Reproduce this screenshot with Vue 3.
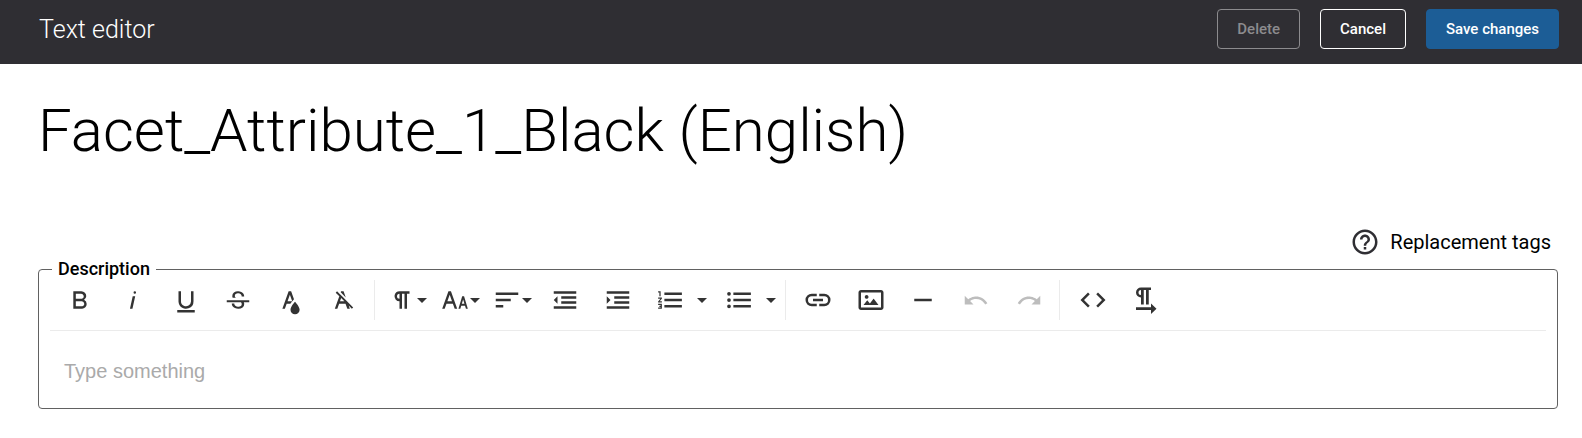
<script setup>
import { ref } from 'vue'

const description = ref('')

const help =
  'M11 18h2v-2h-2v2zm1-16C6.48 2 2 6.48 2 12s4.48 10 10 10 10-4.48 10-10S17.52 2 12 2zm0 18c-4.41 0-8-3.59-8-8s3.59-8 8-8 8 3.59 8 8-3.59 8-8 8zm0-14c-2.21 0-4 1.79-4 4h2c0-1.1.9-2 2-2s2 .9 2 2c0 2-3 1.75-3 5h2c0-2.25 3-2.5 3-5 0-2.21-1.79-4-4-4z'

const groups = [
  {
    name: 'text',
    items: [
      { label: 'Bold', d: 'M15.25,11.8h0A3.68,3.68,0,0,0,17,9a3.93,3.93,0,0,0-3.86-4H6.65V19h7a3.74,3.74,0,0,0,3.7-3.78V15.1A3.64,3.64,0,0,0,15.25,11.8ZM8.65,7h4.2a2.09,2.09,0,0,1,2,1.3,2.09,2.09,0,0,1-1.37,2.61,2.23,2.23,0,0,1-.63.09H8.65Zm4.6,10H8.65V13h4.6a2.09,2.09,0,0,1,2,1.3,2.09,2.09,0,0,1-1.37,2.61A2.23,2.23,0,0,1,13.25,17Z' },
      { label: 'Italic', d: 'M11.76,9h2l-2.2,10h-2Zm1.68-4a1,1,0,1,0,1,1,1,1,0,0,0-1-1Z' },
      { label: 'Underline', d: 'M19,20v2H5V20Zm-3-6.785a4,4,0,0,1-5.74,3.4A3.75,3.75,0,0,1,8,13.085V5.005H6v8.21a6,6,0,0,0,8,5.44,5.851,5.851,0,0,0,4-5.65v-8H16ZM16,5v0h2V5ZM8,5H6v0H8Z' },
      { label: 'Strikethrough', d: 'M3,12.20294H21v1.5H16.63422a3.59782,3.59782,0,0,1,.34942,1.5929,3.252,3.252,0,0,1-1.31427,2.6997A5.55082,5.55082,0,0,1,12.20251,19a6.4421,6.4421,0,0,1-2.62335-.539,4.46335,4.46335,0,0,1-1.89264-1.48816,3.668,3.668,0,0,1-.67016-2.15546V14.704h.28723v-.0011h.34149v.0011H9.02v.11334a2.18275,2.18275,0,0,0,.85413,1.83069,3.69,3.69,0,0,0,2.32836.67926,3.38778,3.38778,0,0,0,2.07666-.5462,1.73346,1.73346,0,0,0,.7013-1.46655,1.69749,1.69749,0,0,0-.647-1.43439,3.00525,3.00525,0,0,0-.27491-.17725H3ZM16.34473,7.05981A4.18163,4.18163,0,0,0,14.6236,5.5462,5.627,5.627,0,0,0,12.11072,5,5.16083,5.16083,0,0,0,8.74719,6.06213,3.36315,3.36315,0,0,0,7.44006,8.76855a3.22923,3.22923,0,0,0,.3216,1.42786h2.59668c-.08338-.05365-.18537-.10577-.25269-.16064a1.60652,1.60652,0,0,1-.65283-1.30036,1.79843,1.79843,0,0,1,.68842-1.5108,3.12971,3.12971,0,0,1,1.96948-.55243,3.04779,3.04779,0,0,1,2.106.6687,2.35066,2.35066,0,0,1,.736,1.83258v.11341h2.00317V9.17346A3.90013,3.90013,0,0,0,16.34473,7.05981Z' },
      { label: 'Text color', d: 'M15.2,13.494s-3.6,3.9-3.6,6.3a3.65,3.65,0,0,0,7.3.1v-.1C18.9,17.394,15.2,13.494,15.2,13.494Zm-1.47-1.357.669-.724L12.1,5h-2l-5,14h2l1.43-4h2.943A24.426,24.426,0,0,1,13.726,12.137ZM11.1,7.8l1.86,5.2H9.244Z' },
      { label: 'Clear formatting', d: 'M11.48,10.09l-1.2-1.21L8.8,7.41,6.43,5,5.37,6.1,8.25,9,4.66,19h2l1.43-4h5.14l1.43,4h2l-.89-2.51L18.27,19l1.07-1.06L14.59,13.2ZM8.8,13l.92-2.56L12.27,13Zm.56-7.15L9.66,5h2l1.75,4.9Z' },
    ],
  },
  {
    name: 'paragraph',
    items: [
      { label: 'Paragraph format', menu: true, d: 'M10.15,5A4.11,4.11,0,0,0,6.08,8.18,4,4,0,0,0,10,13v6h2V7h2V19h2V7h2V5ZM8,9a2,2,0,0,1,2-2v4A2,2,0,0,1,8,9Z' },
      { label: 'Font size', menu: true, d: 'M20.75,19h1.5l-3-10h-1.5l-3,10h1.5L17,16.5h3Zm-3.3-4,1.05-3.5L19.55,15Zm-5.7,4h2l-5-14h-2l-5,14h2l1.43-4h5.14ZM5.89,13,7.75,7.79,9.61,13Z' },
      { label: 'Align', menu: true, d: 'M3,18h6V16H3ZM3,6v2h18V6ZM3,13h12V11H3Z' },
      { label: 'Decrease indent', d: 'M3,12l3,3V9ZM3,19h18v-2H3ZM3,7h18V5H3ZM9,11h12V9H9ZM9,15h12v-2H9Z' },
      { label: 'Increase indent', d: 'M3,9v6l3-3ZM3,19h18v-2H3ZM3,7h18V5H3ZM9,11h12V9H9ZM9,15h12v-2H9Z' },
      { label: 'Ordered list', split: true, d: 'M2.5,16h2v.5h-1v1h1V18h-2v1h3V15h-3Zm1-7h1V5h-2V6h1Zm-1,2H4.3L2.5,13.1V14h3V13H3.7l1.8-2.1V10h-3Zm5-5V8h14V6Zm0,12h14V16H7.5Zm0-5h14V11H7.5Z' },
      { label: 'Unordered list', split: true, d: 'M4,10.5a1.5,1.5,0,1,0,0,3a1.5,1.5,0,1,0,0-3ZM4,5.5a1.5,1.5,0,1,0,0,3a1.5,1.5,0,1,0,0-3ZM4,15.5a1.5,1.5,0,1,0,0,3a1.5,1.5,0,1,0,0-3ZM7.5,6v2h14V6ZM7.5,18h14v-2h-14ZM7.5,13h14v-2h-14Z' },
    ],
  },
  {
    name: 'insert',
    items: [
      { label: 'Insert link', d: 'M11,17H7A5,5,0,0,1,7,7h4V9H7a3,3,0,0,0,0,6h4ZM17,7H13V9h4a3,3,0,0,1,0,6H13v2h4A5,5,0,0,0,17,7Zm-1,4H8v2h8Z' },
      { label: 'Insert image', d: 'M14.2,11l3.8,5H6l3-3.9l2.1,2.7L14,11H14.2z M8.5,11c0.8,0,1.5-0.7,1.5-1.5S9.3,8,8.5,8S7,8.7,7,9.5C7,10.3,7.7,11,8.5,11z M22,6v12c0,1.1-0.9,2-2,2H4c-1.1,0-2-0.9-2-2V6c0-1.1,0.9-2,2-2h16C21.1,4,22,4.9,22,6z M20,8.8V6H4v12h16V8.8z' },
      { label: 'Insert horizontal line', d: 'M5,11h14v2H5Z' },
      { label: 'Undo', disabled: true, d: 'M10.4,9.4c-1.7,0.3-3.2,0.9-4.6,2L3,8.5v7h7l-2.7-2.7c3.7-2.6,8.8-1.8,11.5,1.9c0.2,0.3,0.4,0.5,0.5,0.8l1.8-0.9C18.9,10.8,14.7,8.7,10.4,9.4z' },
      { label: 'Redo', disabled: true, d: 'M13.6,9.4c1.7,0.3,3.2,0.9,4.6,2L21,8.5v7h-7l2.7-2.7C13,10.1,7.9,11,5.3,14.7c-0.2,0.3-0.4,0.5-0.5,0.8L3,14.6C5.1,10.8,9.3,8.7,13.6,9.4z' },
    ],
  },
  {
    name: 'view',
    items: [
      { label: 'Code view', d: 'M9.4,16.6,4.8,12,9.4,7.4,8,6,2,12l6,6Zm5.2,0L19.2,12,14.6,7.4,16,6l6,6-6,6Z' },
      { label: 'Left to right', d: 'M8,2A4,4,0,0,0,8,10V15.5h2.2V4h1.8V15.5h2.2V4H16V2ZM8,4V8A2,2,0,0,1,8,4ZM4,17.8H16V14.8L20.4,19L16,23.2V20H4Z' },
    ],
  },
]
</script>

<template>
  <div class="page">
    <header class="bar">
      <span class="bar-title">Text editor</span>
      <div class="actions">
        <button type="button" class="btn" disabled>Delete</button>
        <button type="button" class="btn">Cancel</button>
        <button type="button" class="btn primary">Save changes</button>
      </div>
    </header>

    <main class="content">
      <h1>Facet_Attribute_1_Black (English)</h1>

      <a class="tags" href="#replacement-tags">
        <svg class="icon" viewBox="0 0 24 24" aria-hidden="true"><path :d="help" /></svg>
        <span>Replacement tags</span>
      </a>

      <fieldset class="editor">
        <legend><label for="description">Description</label></legend>
        <div class="toolbar" role="toolbar" aria-label="Formatting">
          <div v-for="g in groups" :key="g.name" class="group" :class="g.name">
            <template v-for="item in g.items" :key="item.label">
              <button type="button" class="tool" :disabled="item.disabled" :aria-label="item.label">
                <svg class="icon" viewBox="0 0 24 24" aria-hidden="true"><path :d="item.d" /></svg>
                <svg v-if="item.menu" class="caret" viewBox="0 0 10 5" aria-hidden="true"><path d="M0 0h10L5 5z" /></svg>
              </button>
              <button v-if="item.split" type="button" class="tool more" :aria-label="item.label + ' options'">
                <svg class="caret" viewBox="0 0 10 5" aria-hidden="true"><path d="M0 0h10L5 5z" /></svg>
              </button>
            </template>
          </div>
        </div>
        <textarea id="description" v-model="description" rows="1" placeholder="Type something"></textarea>
      </fieldset>
    </main>
  </div>
</template>

<style>
body {
  margin: 0;
  background: #fff;
}
</style>

<style scoped>
.page {
  font-family: Roboto, "Liberation Sans", sans-serif;
  color: #000;
}
.bar {
  display: flex;
  align-items: center;
  justify-content: space-between;
  box-sizing: border-box;
  min-height: 64px;
  padding: 0 23px 6px 39px;
  background: #2f2e33;
}
.bar-title {
  color: #fff;
  font-size: 25px;
  font-weight: 300;
  line-height: 32px;
  padding-top: 2px;
}
.actions {
  display: flex;
  gap: 20px;
}
.btn {
  height: 40px;
  padding: 0 19px;
  border: 1px solid #fff;
  border-radius: 4px;
  background: transparent;
  color: #fff;
  font: 500 15px/20px Roboto, "Liberation Sans", sans-serif;
}
.btn:disabled {
  border-color: #8c8b8e;
  color: #8c8b8e;
}
.primary {
  border-color: #1c5d96;
  background: #1c5d96;
}
.content {
  display: flex;
  flex-direction: column;
  padding: 31px 24px 28px 38px;
}
h1 {
  margin: 0;
  font-size: 60px;
  font-weight: 300;
  line-height: 72px;
}
.tags {
  display: flex;
  align-items: center;
  align-self: flex-end;
  gap: 10px;
  margin: 60px 7px 2px 0;
  color: #000;
  font-size: 20px;
  line-height: 30px;
  text-decoration: none;
}
.tags .icon {
  fill: #2f2e33;
}
.icon {
  flex: none;
  width: 30px;
  height: 30px;
  fill: #333;
}
.caret {
  flex: none;
  width: 10px;
  height: 5px;
  fill: #333;
}
.editor {
  min-width: 0;
  margin: 0;
  padding: 1px 11px 0;
  border: 1px solid #616161;
  border-radius: 4px;
}
legend {
  margin-left: 2px;
  padding: 0 6px;
  font-size: 18px;
  font-weight: 500;
  line-height: 20px;
}
.toolbar {
  display: flex;
  flex-wrap: wrap;
  padding-bottom: 10px;
  border-bottom: 1px solid #ebebeb;
}
.group {
  display: flex;
  box-sizing: border-box;
  height: 40px;
  padding: 0 4px;
}
.group + .group {
  padding-left: 6px;
  border-left: 1px solid #ebebeb;
}
.text {
  width: 324px;
}
.paragraph {
  width: 411px;
}
.insert {
  width: 274px;
}
.view {
  width: 118px;
}
.tool {
  display: flex;
  flex: 1;
  align-items: center;
  justify-content: center;
  min-width: 0;
  padding: 0;
  border: 0;
  background: transparent;
}
.tool:disabled .icon {
  fill: #bdbdbd;
}
.more {
  flex: none;
  width: 16px;
  padding-right: 4px;
}
textarea {
  display: block;
  box-sizing: border-box;
  width: 100%;
  height: 77px;
  padding: 28px 14px 24px;
  border: 0;
  outline: 0;
  resize: none;
  background: transparent;
  color: #000;
  font: 20px/25px "Liberation Sans", Arial, sans-serif;
}
textarea::placeholder {
  color: #aaa;
  opacity: 1;
}
</style>
